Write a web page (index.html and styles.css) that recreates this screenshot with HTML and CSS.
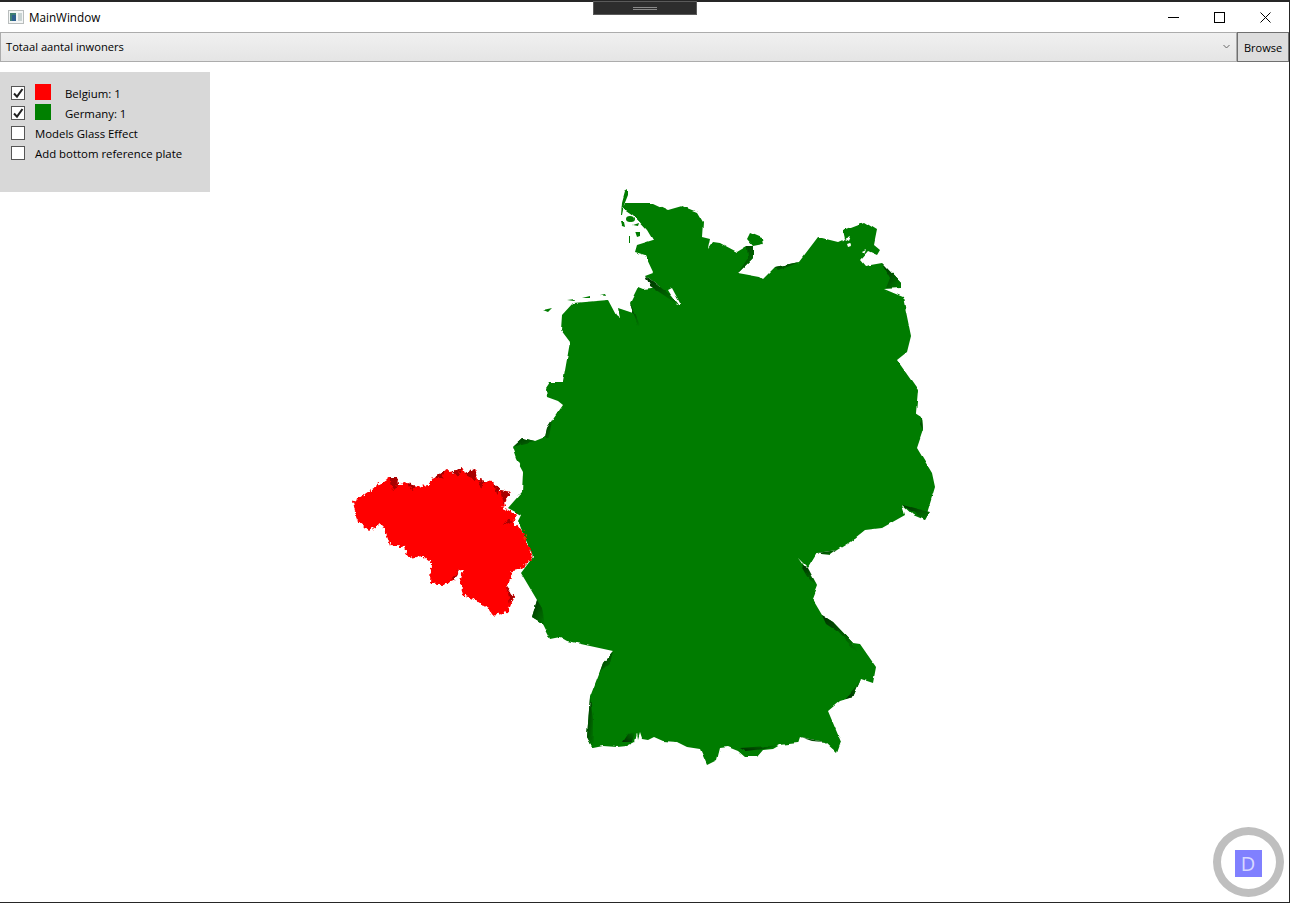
FILE: index.html
```html
<!DOCTYPE html>
<html lang="nl">
<head>
    <meta charset="UTF-8">
    <title>MainWindow</title>
    <link rel="stylesheet" href="styles.css">
</head>
<body>
    <div class="window">
        <div class="grabber"><span></span><span></span></div>

        <header class="titlebar">
            <svg class="app-icon" width="16" height="14" viewBox="0 0 16 14">
                <rect x="0.5" y="0.5" width="15" height="13" fill="#f4f6f6" stroke="#b9bdbd"/>
                <rect x="2" y="3" width="6" height="8" fill="#3f7f74"/>
                <rect x="4" y="5" width="4" height="6" fill="#2e5f8f"/>
                <rect x="10" y="3" width="4" height="8" fill="#c9d3d3"/>
            </svg>
            <span class="title">MainWindow</span>
            <div class="caption-buttons">
                <svg width="46" height="30" viewBox="0 0 46 30"><path d="M17 15.5h11" stroke="#000" fill="none"/></svg>
                <svg width="46" height="30" viewBox="0 0 46 30"><rect x="17.5" y="10.5" width="10" height="10" stroke="#000" fill="none"/></svg>
                <svg width="46" height="30" viewBox="0 0 46 30"><path d="M17.5 10.5l10 10M27.5 10.5l-10 10" stroke="#000" fill="none"/></svg>
            </div>
        </header>

        <div class="toolbar">
            <div class="combo">
                <span>Totaal aantal inwoners</span>
                <svg width="7" height="5" viewBox="0 0 7 5"><path d="M0.5 1l3 3 3-3" stroke="#666" fill="none"/></svg>
            </div>
            <div class="browse-btn">Browse</div>
        </div>

        <main class="content">
            <svg class="map" viewBox="0 62 1289 840">
                <defs>
                    <linearGradient id="shadeG" x1="0" y1="0" x2="1" y2="1">
                        <stop offset="0" stop-color="#003000"/>
                        <stop offset="1" stop-color="#007c00"/>
                    </linearGradient>
                    <linearGradient id="shadeH" x1="0" y1="1" x2="1" y2="0">
                        <stop offset="0" stop-color="#002800"/>
                        <stop offset="1" stop-color="#007c00"/>
                    </linearGradient>
                    <filter id="roughG" x="-5%" y="-5%" width="110%" height="110%" color-interpolation-filters="sRGB">
                        <feTurbulence type="fractalNoise" baseFrequency="0.1" numOctaves="2" seed="4"/>
                        <feDisplacementMap in="SourceGraphic" scale="3" xChannelSelector="R" yChannelSelector="G"/>
                    </filter>
                    <filter id="roughB" x="-5%" y="-5%" width="110%" height="110%" color-interpolation-filters="sRGB">
                        <feTurbulence type="fractalNoise" baseFrequency="0.3" numOctaves="2" seed="9"/>
                        <feDisplacementMap in="SourceGraphic" scale="6" xChannelSelector="R" yChannelSelector="G"/>
                    </filter>
                </defs>

                <!-- Germany -->
                <g filter="url(#roughG)">
                    <g fill="#007c00">
                        <polygon points="625,203 637,203 653,203 668,210 682,206 697,212 703,222 702,237 710,239 708,249 713,242 720,243 737,252 747,246 753,246 747,239 750,233 762,238 763,244 753,246 753,258 738,273 760,277 763,279 775,267 799,262 818,237 838,242 845,239 843,230 864,222 877,230 874,245 880,250 877,255 868,251 860,260 865,266 882,263 901,283 901,288 884,289 903,297 911,336 907,352 897,360 918,390 916,413 922,417 923,430 917,448 932,473 935,487 925,520 913,515 902,505 905,515 882,528 865,530 850,542 837,550 817,553 808,568 798,558 817,585 812,598 822,615 833,622 853,643 860,644 876,667 873,683 861,679 853,697 840,701 828,711 841,742 837,753 825,742 800,737 798,743 780,745 773,749 763,750 757,757 745,757 738,751 728,747 720,748 717,760 707,765 700,749 687,747 677,742 663,741 654,737 648,740 642,739 640,733 638,740 637,733 635,742 627,746 617,747 603,746 593,748 587,737 590,697 603,663 613,651 567,641 560,637 550,639 542,623 532,617 537,600 521,573 533,557 518,521 521,515 508,508 522,492 523,472 516,459 512,447 522,438 535,441 545,437 547,428 563,405 558,401 547,397 546,388 550,382 563,382 570,342 561,330 562,315 573,303 608,300 616,315 620,318 618,308 633,313 630,303 638,287 643,289 660,287 645,275 653,272 645,255 635,252 637,245 653,240 647,230 633,215 623,208"/>
                        <polygon points="621,215 622,203 625,192 628,190 628,195 624,205 622,215"/>
                        <ellipse cx="630" cy="219" rx="4" ry="3"/>
                        <polygon points="621,222 624,222 625,227 622,226"/>
                        <polygon points="635,232 640,232 640,237 637,238"/>
                        <polygon points="632,225 638,223 637,226"/>
                        <polygon points="629,236 630,236 630,243 629,243"/>
                        <polygon points="543,310 552,308 548,312"/>
                        <polygon points="567,300 575,299 574,301"/>
                        <polygon points="582,298 590,296 590,298"/>
                        <polygon points="600,295 605,294 606,296"/>
                    </g>

                    <!-- white gaps in the coast -->
                    <g fill="#fff">
                        <polygon points="668,290 672,288 681,305 677,305"/>
                        <polygon points="845,239 851,236 849,241"/>
                        <polygon points="847,244 850,243 851,246 848,247"/>
                        <polygon points="862,252 866,250 864,254"/>
                    </g>

                    <!-- shaded relief edges -->
                    <g fill="url(#shadeG)">
                        <polygon points="645,275 660,287 672,296 680,306 662,294 650,286"/>
                        <polygon points="747,246 753,246 753,258 738,273 748,258"/>
                        <polygon points="775,267 799,262 790,266 778,270"/>
                        <polygon points="882,263 901,283 901,288 886,288 890,278"/>
                        <polygon points="633,313 630,303 640,325 638,326"/>
                        <polygon points="547,428 552,420 549,438 545,438"/>
                        <polygon points="512,447 522,438 535,441 522,444"/>
                        <polygon points="537,600 532,617 545,625 542,608"/>
                        <polygon points="613,651 603,663 600,672 610,664"/>
                        <polygon points="590,697 587,737 593,748 593,720"/>
                        <polygon points="822,615 833,622 853,643 858,653 838,632 826,624"/>
                        <polygon points="808,568 817,585 810,580 802,566"/>
                        <polygon points="902,505 925,520 930,512 910,507"/>
                        <polygon points="817,553 837,550 830,555 820,554"/>
                    </g>
                    <g fill="url(#shadeH)">
                        <polygon points="740,748 780,745 765,749 745,751"/>
                        <polygon points="861,679 853,697 845,699 857,685"/>
                        <polygon points="800,737 825,742 812,741"/>
                        <polygon points="627,734 635,732 632,742 622,742"/>
                        <polygon points="922,417 923,430 920,424"/>
                    </g>
                </g>

                <!-- Belgium -->
                <g filter="url(#roughB)">
                    <polygon fill="#f00" points="353,502 390,477 397,477 398,485 408,482 416,487 428,485 433,478 447,469 452,473 462,467 465,473 475,469 478,480 493,482 500,490 510,492 503,508 508,510 517,515 513,522 522,530 533,557 522,568 513,570 507,587 514,597 508,612 492,615 488,608 475,600 463,595 460,582 463,570 459,570 455,580 443,585 430,583 431,563 423,556 408,558 405,547 390,545 383,525 380,524 370,531 357,520"/>
                    <g fill="#a80000">
                        <polygon points="390,477 397,477 398,485 393,490"/>
                        <polygon points="408,482 416,487 411,490"/>
                        <polygon points="433,478 447,469 441,478"/>
                        <polygon points="452,473 462,467 458,476"/>
                        <polygon points="465,473 475,469 476,480 470,478"/>
                        <polygon points="478,480 485,481 481,488"/>
                        <polygon points="493,482 500,490 497,494"/>
                        <polygon points="500,490 510,492 504,504"/>
                        <polygon points="513,522 504,525 509,518"/>
                        <polygon points="507,587 514,597 510,604"/>
                        <polygon points="459,570 455,580 451,579"/>
                    </g>
                    <polygon fill="#e04000" points="524,536 527,534 525,541"/>
                </g>
            </svg>

            <aside class="panel">
                <div class="row">
                    <span class="check"><svg width="12" height="12" viewBox="0 0 12 12"><path d="M2 6.5l3 3.2L10.5 2" stroke="#222" stroke-width="2" fill="none"/></svg></span>
                    <span class="swatch red"></span>
                    <span class="legend-label">Belgium: 1</span>
                </div>
                <div class="row">
                    <span class="check"><svg width="12" height="12" viewBox="0 0 12 12"><path d="M2 6.5l3 3.2L10.5 2" stroke="#222" stroke-width="2" fill="none"/></svg></span>
                    <span class="swatch green"></span>
                    <span class="legend-label">Germany: 1</span>
                </div>
                <div class="row">
                    <span class="check"></span>
                    <span>Models Glass Effect</span>
                </div>
                <div class="row">
                    <span class="check"></span>
                    <span>Add bottom reference plate</span>
                </div>
            </aside>

            <div class="badge"><span>D</span></div>
        </main>
    </div>
</body>
</html>
```

FILE: styles.css
```css
* {
    box-sizing: border-box;
}

html, body {
    margin: 0;
    height: 100%;
    overflow: hidden;
}

body {
    background: #fff;
    color: #000;
    font-family: "Open Sans", "Noto Sans", sans-serif;
    font-size: 11.4px;
}

.window {
    position: relative;
    width: 1290px;
    height: 903px;
    display: flex;
    flex-direction: column;
    border-top: 2px solid #262626;
    border-right: 1px solid #262626;
    border-bottom: 1px solid #262626;
}

.grabber {
    position: absolute;
    top: -1px;
    left: 593px;
    width: 104px;
    height: 14px;
    background: #2d2d2d;
    border: 1px solid #5a5a5a;
    display: flex;
    flex-direction: column;
    align-items: center;
    justify-content: center;
    gap: 1px;
}

.grabber span {
    width: 24px;
    height: 1px;
    background: #8a8a8a;
}

.titlebar {
    height: 30px;
    display: flex;
    align-items: center;
    padding-left: 8px;
    flex: none;
}

.app-icon {
    margin-right: 5px;
}

.title {
    font-size: 11.7px;
    flex: 1;
}

.caption-buttons {
    display: flex;
}

.toolbar {
    height: 30px;
    display: flex;
    flex: none;
}

.combo {
    flex: 1;
    display: flex;
    align-items: center;
    justify-content: space-between;
    padding: 0 6px 2px 5px;
    border: 1px solid #acacac;
    background: linear-gradient(#f0f0f0, #e5e5e5);
    font-size: 11.15px;
}

.browse-btn {
    width: 52px;
    display: flex;
    align-items: center;
    justify-content: center;
    background: #dddddd;
    border: 1px solid #707070;
    font-size: 11px;
}

.content {
    position: relative;
    flex: 1;
    display: grid;
    min-height: 0;
}

.map, .panel {
    grid-area: 1 / 1;
}

.map {
    width: 100%;
    height: 100%;
    display: block;
}

.panel {
    margin-top: 10px;
    width: 210px;
    height: 120px;
    padding-top: 10px;
    background: #d8d8d8;
    z-index: 1;
}

.row {
    height: 20px;
    display: flex;
    align-items: center;
    padding-left: 11px;
    padding-top: 2px;
    white-space: nowrap;
}

.check {
    width: 14px;
    height: 14px;
    margin-right: 10px;
    background: #fff;
    border: 1px solid #555;
    display: flex;
    align-items: center;
    justify-content: center;
    flex: none;
}

.swatch {
    width: 16px;
    height: 16px;
    margin-top: -2px;
    flex: none;
}

.swatch.red {
    background: #f00;
}

.swatch.green {
    background: #008000;
}

.legend-label {
    margin-left: 14px;
}

.badge {
    position: absolute;
    right: 5px;
    bottom: 5px;
    width: 71px;
    height: 70px;
    border: 8px solid #bfbfbf;
    border-radius: 50%;
    display: flex;
    align-items: center;
    justify-content: center;
}

.badge span {
    width: 27px;
    height: 27px;
    margin: 2px 1px 0 0;
    background: #8080ff;
    color: #d8d8ff;
    font-size: 20px;
    line-height: 27px;
    text-align: center;
}
```
